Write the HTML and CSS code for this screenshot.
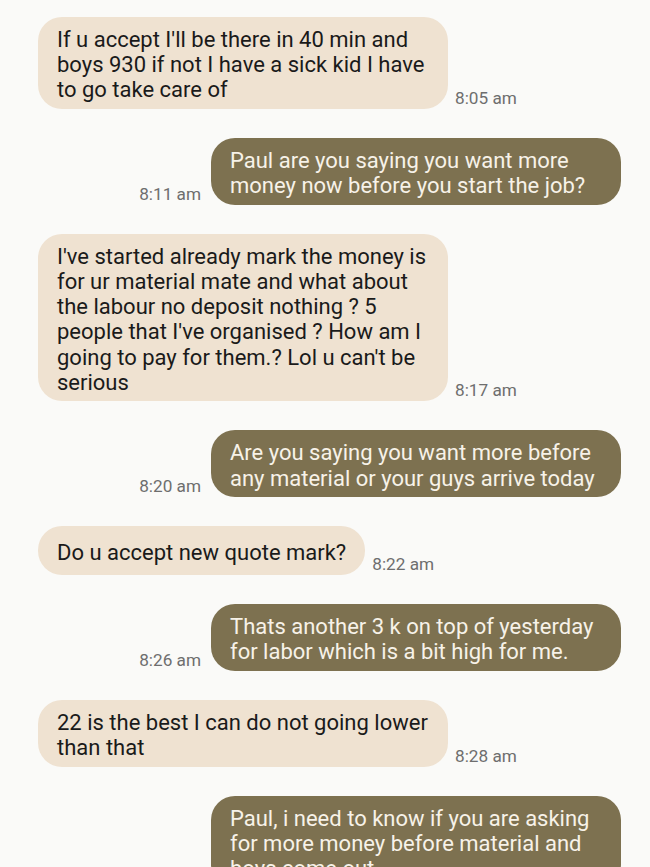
FILE: index.html
```html
<!DOCTYPE html>
<html>
<head>
<meta charset="utf-8">
<link rel="stylesheet" href="styles.css">
</head>
<body>
<div class="chat">
  <div class="row in">
    <div class="bubble">If u accept I'll be there in 40 min and boys 930 if not I have a sick kid I have to go take care of</div>
    <span class="time">8:05 am</span>
  </div>
  <div class="row out">
    <span class="time">8:11 am</span>
    <div class="bubble">Paul are you saying you want more money now before you start the job?</div>
  </div>
  <div class="row in">
    <div class="bubble">I've started already mark the money is for ur material mate and what about the labour no deposit nothing ? 5 people that I've organised ? How am I going to pay for them.? Lol u can't be serious</div>
    <span class="time">8:17 am</span>
  </div>
  <div class="row out">
    <span class="time">8:20 am</span>
    <div class="bubble">Are you saying you want more before any material or your guys arrive today</div>
  </div>
  <div class="row in">
    <div class="bubble">Do u accept new quote mark?</div>
    <span class="time">8:22 am</span>
  </div>
  <div class="row out">
    <span class="time">8:26 am</span>
    <div class="bubble">Thats another 3 k on top of yesterday for labor which is a bit high for me.</div>
  </div>
  <div class="row in">
    <div class="bubble">22 is the best I can do not going lower than that</div>
    <span class="time">8:28 am</span>
  </div>
  <div class="row out">
    <span class="time">8:30 am</span>
    <div class="bubble">Paul, i need to know if you are asking for more money before material and boys come out</div>
  </div>
</div>
</body>
</html>
```
FILE: styles.css
```css
html, body {
  margin: 0;
  padding: 0;
  background: #fafaf8;
  height: 867px;
  overflow: hidden;
}
.chat {
  display: flex;
  flex-direction: column;
  gap: 29px;
  padding: 17px 29px 0 38px;
  font-family: Roboto, "Noto Sans", sans-serif;
}
.row {
  display: flex;
  align-items: flex-end;
}
.row.in {
  justify-content: flex-start;
  gap: 7px;
}
.row.out {
  justify-content: flex-end;
  gap: 10px;
}
.bubble {
  box-sizing: border-box;
  max-width: 410px;
  min-height: 49px;
  display: flex;
  align-items: center;
  padding: 10px 19px 6.4px;
  border-radius: 24px;
  font-size: 22px;
  line-height: 25.2px;
}
.row.out .bubble {
  width: 410px;
}
.in .bubble {
  background: #efe2d1;
  color: #1a1a1a;
}
.out .bubble {
  background: #7d7150;
  color: #f7f2e8;
}
.time {
  font-size: 17.2px;
  line-height: 20px;
  color: #6e6e6e;
  white-space: nowrap;
  padding-bottom: 1px;
}
```
